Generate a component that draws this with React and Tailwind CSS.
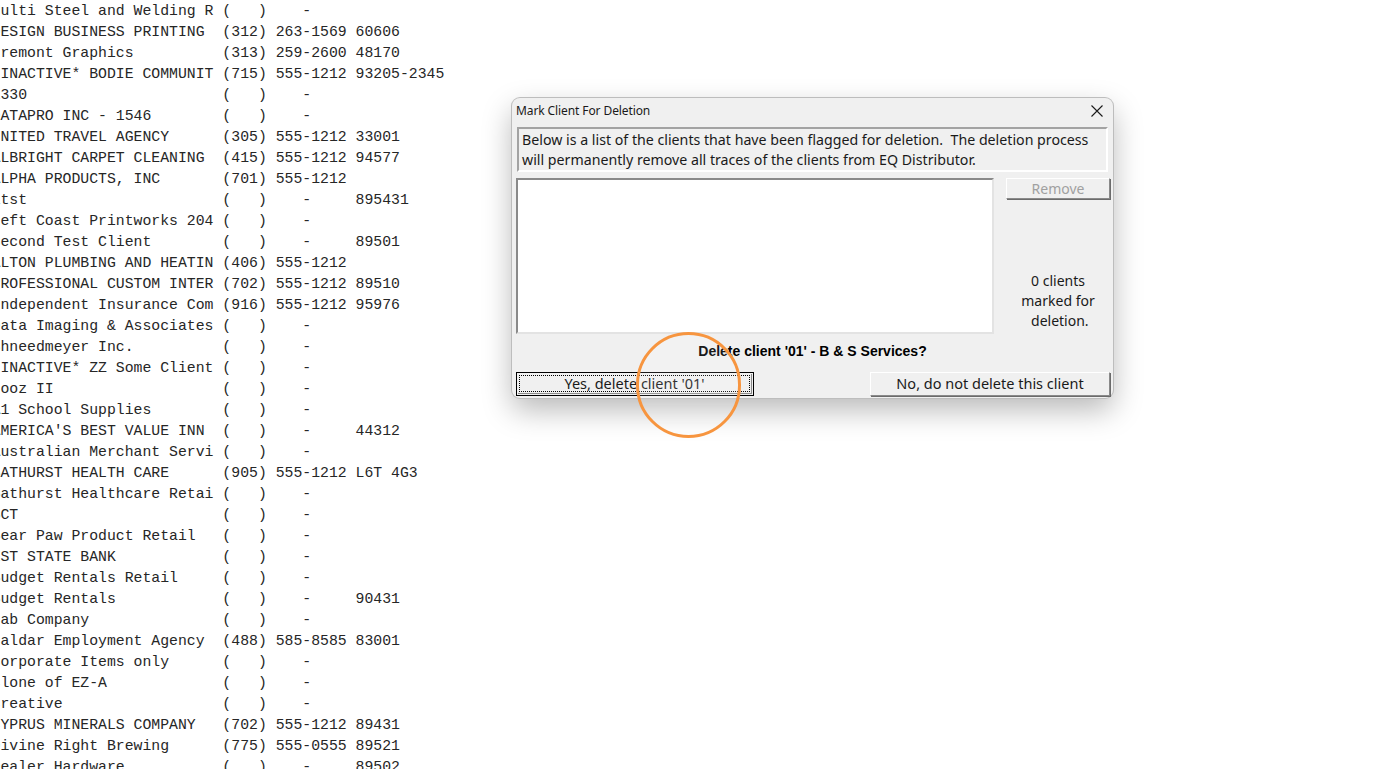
import React from "react";

const rows = [
  ["Multi Steel and Welding R", "", "", ""],
  ["DESIGN BUSINESS PRINTING", "312", "263-1569", "60606"],
  ["Fremont Graphics", "313", "259-2600", "48170"],
  ["*INACTIVE* BODIE COMMUNIT", "715", "555-1212", "93205-2345"],
  ["1330", "", "", ""],
  ["DATAPRO INC - 1546", "", "", ""],
  ["UNITED TRAVEL AGENCY", "305", "555-1212", "33001"],
  ["ALBRIGHT CARPET CLEANING", "415", "555-1212", "94577"],
  ["ALPHA PRODUCTS, INC", "701", "555-1212", ""],
  ["atst", "", "", "895431"],
  ["Left Coast Printworks 204", "", "", ""],
  ["Second Test Client", "", "", "89501"],
  ["ALTON PLUMBING AND HEATIN", "406", "555-1212", ""],
  ["PROFESSIONAL CUSTOM INTER", "702", "555-1212", "89510"],
  ["Independent Insurance Com", "916", "555-1212", "95976"],
  ["Data Imaging & Associates", "", "", ""],
  ["Shneedmeyer Inc.", "", "", ""],
  ["*INACTIVE* ZZ Some Client", "", "", ""],
  ["booz II", "", "", ""],
  ["A1 School Supplies", "", "", ""],
  ["AMERICA'S BEST VALUE INN", "", "", "44312"],
  ["Australian Merchant Servi", "", "", ""],
  ["BATHURST HEALTH CARE", "905", "555-1212", "L6T 4G3"],
  ["Bathurst Healthcare Retai", "", "", ""],
  ["BCT", "", "", ""],
  ["Bear Paw Product Retail", "", "", ""],
  ["1ST STATE BANK", "", "", ""],
  ["Budget Rentals Retail", "", "", ""],
  ["Budget Rentals", "", "", "90431"],
  ["Cab Company", "", "", ""],
  ["Caldar Employment Agency", "488", "585-8585", "83001"],
  ["Corporate Items only", "", "", ""],
  ["Clone of EZ-A", "", "", ""],
  ["Creative", "", "", ""],
  ["CYPRUS MINERALS COMPANY", "702", "555-1212", "89431"],
  ["Divine Right Brewing", "775", "555-0555", "89521"],
  ["Dealer Hardware", "", "", "89502"],
];

// fixed-width record: 25-char name, phone "(aaa) ppp-pppp", zip
function line([name, area, phone, zip]) {
  const n = name.padEnd(25, " ").slice(0, 25);
  const a = area ? area : "   ";
  const p = phone ? phone : "   -    ";
  return `${n} (${a}) ${p} ${zip}`;
}

const ui = { fontFamily: '"Noto Sans", "Open Sans", sans-serif' };

function CloseIcon() {
  return (
    <svg width="12" height="12" viewBox="0 0 12 12" className="block">
      <path d="M0.5 0.5 L11.5 11.5 M11.5 0.5 L0.5 11.5" stroke="#1a1a1a" strokeWidth="1.1" fill="none" />
    </svg>
  );
}

export default function App() {
  return (
    <div className="relative w-[1377px] h-[769px] overflow-hidden bg-white">
      {/* client listing */}
      <pre
        className="m-0 ml-[-8.5px] pt-[1px] text-[14.8px] leading-[21px] text-[#262626]"
        style={{ fontFamily: '"Liberation Mono", "Courier New", monospace' }}
      >
        {rows.map((r, i) => (
          <div key={i} className="h-[21px] whitespace-pre">
            {line(r)}
          </div>
        ))}
      </pre>

      {/* deletion dialog */}
      <div
        className="absolute left-[512px] top-[98px] w-[601px] h-[300px] rounded-[8px] bg-[#f0f0f0] ring-1 ring-[#bdbdbd] shadow-[0_12px_30px_rgba(0,0,0,0.28)] flex flex-col"
        style={ui}
      >
        <div className="h-[26px] flex items-center justify-between pl-[4px] pr-[10px]">
          <span className="text-[12px] text-[#1a1a1a] tracking-[-0.1px]">Mark Client For Deletion</span>
          <CloseIcon />
        </div>

        <div className="mt-[3px] mx-[5px] h-[45px] border-2 border-t-[#a3a3a3] border-l-[#a3a3a3] border-b-white border-r-white pl-[3px] pt-[1px] text-[14.2px] leading-[20px] text-[#1a1a1a] whitespace-pre">
          {"Below is a list of the clients that have been flagged for deletion.  The deletion process\nwill permanently remove all traces of the clients from EQ Distributor."}
        </div>

        <div className="mt-[6px] flex">
          <div className="ml-[4px] w-[478px] h-[156px] bg-white border-2 border-t-[#8a8a8a] border-l-[#8a8a8a] border-b-[#e3e3e3] border-r-[#e3e3e3]" />
          <div className="ml-[12px] w-[104px] flex flex-col">
            <div className="h-[21px] flex items-center justify-center border border-t-white border-l-white border-b-[#8a8a8a] border-r-[#8a8a8a] shadow-[1px_1px_0_#6b6b6b] text-[14px] text-[#a0a0a0]">
              Remove
            </div>
            <div className="mt-[72px] text-center text-[14px] leading-[20px] text-[#1a1a1a]">
              0 clients
              <br />
              marked for
              <br />
              &nbsp;deletion.
            </div>
          </div>
        </div>

        <div
          className="h-[38px] pt-[7px] text-center text-[14px] leading-[20px] font-bold text-black"
          style={{ fontFamily: '"Liberation Sans Narrow", "Liberation Sans", Arial, sans-serif' }}
        >
          Delete client '01' - B &amp; S Services?
        </div>

        <div className="flex justify-between pl-[4px] pr-[3px]">
          <div className="w-[238px] h-[24px] border border-black p-[1px] bg-[#f0f0f0]">
            <div className="h-full border-b border-r border-[#8a8a8a] p-[1px]">
              <div className="h-full border border-dotted border-black flex items-center justify-center text-[14.5px] text-[#1a1a1a]">
                Yes, delete client '01'
              </div>
            </div>
          </div>
          <div className="w-[240px] h-[24px] border border-t-white border-l-white border-b-[#8a8a8a] border-r-[#8a8a8a] shadow-[1px_1px_0_#6b6b6b] flex items-center justify-center text-[14.5px] text-[#1a1a1a]">
            No, do not delete this client
          </div>
        </div>
      </div>

      {/* highlight ring */}
      <div className="absolute left-[636px] top-[332px] w-[105px] h-[106px] rounded-full border-[3.5px] border-[#f7953f] bg-white/10" />
    </div>
  );
}
